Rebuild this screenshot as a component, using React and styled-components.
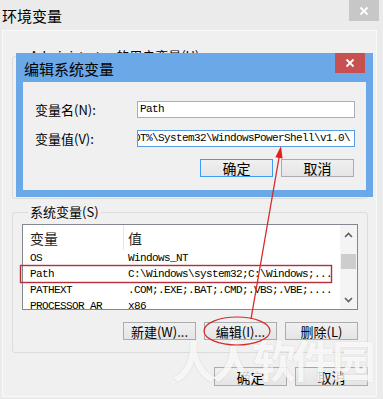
import styled, { createGlobalStyle } from "styled-components";

const UI = `"Noto Sans CJK SC", "Microsoft YaHei", sans-serif`;
const MONO = `"Liberation Mono", "Noto Sans CJK SC", monospace`;

const GlobalStyle = createGlobalStyle`
  html, body {
    margin: 0;
    padding: 0;
    background: #ebebeb;
  }
  body {
    width: 383px;
    height: 399px;
    overflow: hidden;
  }
`;

const Window = styled.div`
  position: relative;
  width: 383px;
  height: 399px;
  background: #ebebeb;
  display: flex;
  flex-direction: column;
  font-family: ${UI};
  color: #000;
  overflow: hidden;
`;

const TitleBar = styled.div`
  height: 29px;
  display: flex;
  align-items: center;
  justify-content: space-between;
  padding-left: 2px;
`;

const Title = styled.span`
  font-size: 15px;
  line-height: 1;
  margin-top: 1px;
`;

const CloseButton = styled.div`
  align-self: flex-start;
  width: 30px;
  height: ${(p) => p.$h}px;
  margin-right: ${(p) => p.$mr}px;
  background: ${(p) => p.$bg};
  display: flex;
  align-items: center;
  justify-content: center;
`;

const Client = styled.div`
  margin: 1px 6px 2px 2px;
  height: 367px;
  box-sizing: border-box;
  border: 1px solid #fafafa;
  background: #f0f0f0;
  padding: 18px 8px 0 9px;
  display: flex;
  flex-direction: column;
`;

const Group = styled.fieldset`
  margin: 0 0 ${(p) => p.$mb || 0}px 0;
  padding: ${(p) => p.$pad};
  border: 1px solid #dcdcdc;
  border-radius: 3px;
  height: ${(p) => p.$h}px;
  box-sizing: border-box;
  min-width: 0;
  display: flex;
  flex-direction: column;
`;

const Legend = styled.legend`
  padding: 0 2px;
  margin-left: 6px;
  font-size: 13px;
  line-height: 14px;
`;

const ListView = styled.div`
  height: 86px;
  box-sizing: border-box;
  border: 1px solid #828790;
  background: #fff;
  display: flex;
  overflow: hidden;
`;

const ListBody = styled.div`
  flex: 1;
  min-width: 0;
  overflow: hidden;
`;

const HeaderRow = styled.div`
  display: grid;
  grid-template-columns: 100px 1fr;
  height: 25px;
  font-size: 14px;
  color: #1e1e1e;
`;

const HeaderCell = styled.div`
  display: flex;
  align-items: center;
  padding-left: ${(p) => (p.$second ? 4 : 7)}px;
  border-left: ${(p) => (p.$second ? "1px solid #e5e5e5" : "none")};
`;

const Row = styled.div`
  display: grid;
  grid-template-columns: 100px 1fr;
  height: 16px;
  line-height: 16px;
  font-family: ${MONO};
  font-size: 11px;
  letter-spacing: -0.6px;
  white-space: nowrap;
`;

const Cell = styled.div`
  padding-left: ${(p) => (p.$second ? 5 : 7)}px;
  overflow: hidden;
`;

const ScrollBar = styled.div`
  width: 17px;
  background: #f4f4f4;
  display: flex;
  flex-direction: column;
`;

const ArrowBtn = styled.div`
  height: 19px;
  display: flex;
  align-items: center;
  justify-content: center;
  margin-top: ${(p) => (p.$down ? "auto" : 0)};
`;

const Thumb = styled.div`
  height: 15px;
  margin: 10px 1px 0;
  background: #cdcdcd;
`;

const ButtonRow = styled.div`
  display: flex;
  justify-content: flex-end;
  gap: 8px;
  margin-top: ${(p) => p.$mt}px;
  margin-right: ${(p) => p.$mr || 0}px;
`;

const Button = styled.div`
  width: 73px;
  height: ${(p) => p.$h}px;
  box-sizing: border-box;
  border: 1px solid ${(p) => (p.$default ? "#3c9bf5" : "#acacac")};
  background: linear-gradient(#f0f0f0, #e5e5e5);
  display: flex;
  align-items: center;
  justify-content: center;
  font-size: ${(p) => p.$fs || 14}px;
  line-height: 1;
`;

const Dialog = styled.div`
  position: absolute;
  left: 16px;
  top: 53px;
  width: 357px;
  height: 144px;
  box-sizing: border-box;
  background: #6aa8e8;
  padding: 0 7px 7px;
  display: flex;
  flex-direction: column;
`;

const DialogTitleBar = styled.div`
  height: 29px;
  display: flex;
  align-items: center;
  justify-content: space-between;
  padding-left: 1px;
`;

const DialogClient = styled.div`
  flex: 1;
  background: #f0f0f0;
  padding: 19px 11px 0 12px;
  display: flex;
  flex-direction: column;
`;

const Field = styled.div`
  display: flex;
  align-items: center;
  margin-top: ${(p) => p.$mt || 0}px;
`;

const Label = styled.div`
  width: 102px;
  font-size: 13px;
  line-height: 1;
`;

const Input = styled.div`
  flex: 1;
  height: 17px;
  box-sizing: border-box;
  border: 1px solid ${(p) => (p.$focus ? "#569de5" : "#abadb3")};
  background: #fff;
  font-family: ${MONO};
  font-size: 11px;
  letter-spacing: -0.6px;
  line-height: 15px;
  white-space: nowrap;
  overflow: hidden;
  padding-left: ${(p) => (p.$focus ? 0 : 2)}px;
  text-indent: ${(p) => (p.$focus ? -4 : 0)}px;
`;

const Watermark = styled.div`
  position: absolute;
  left: 172px;
  top: 337px;
  font-family: ${UI};
  font-size: 44px;
  font-weight: 700;
  letter-spacing: -4px;
  line-height: 1;
  color: rgba(255, 255, 255, 0.82);
  text-shadow: 0 0 2px rgba(0, 0, 0, 0.12);
  pointer-events: none;
`;

const Overlay = styled.svg`
  position: absolute;
  left: 0;
  top: 0;
  pointer-events: none;
`;

const CloseX = () => (
  <svg width="10" height="10" viewBox="0 0 10 10">
    <path d="M1.5 1.5 L8.5 8.5 M8.5 1.5 L1.5 8.5" stroke="#fff" strokeWidth="1.8" />
  </svg>
);

const Chevron = ({ down }) => (
  <svg width="9" height="6" viewBox="0 0 9 6">
    <polyline
      points={down ? "1,1 4.5,4.5 8,1" : "1,5 4.5,1.5 8,5"}
      fill="none"
      stroke="#606060"
      strokeWidth="1.6"
    />
  </svg>
);

const rows = [
  ["OS", "Windows_NT"],
  ["Path", "C:\\Windows\\system32;C:\\Windows;..."],
  ["PATHEXT", ".COM;.EXE;.BAT;.CMD;.VBS;.VBE;...."],
  ["PROCESSOR_AR", "x86"],
];

export default function App() {
  return (
    <>
      <GlobalStyle />
      <Window>
        <TitleBar>
          <Title>环境变量</Title>
          <CloseButton $h={21} $mr={4} $bg="#c7c7c7">
            <CloseX />
          </CloseButton>
        </TitleBar>
        <Client>
          <Group $h={150} $mb={6} $pad="0 9px">
            <Legend>Administrator 的用户变量(U)</Legend>
          </Group>
          <Group $h={148} $pad="5px 9px 12px 9px">
            <Legend>系统变量(S)</Legend>
            <ListView>
              <ListBody>
                <HeaderRow>
                  <HeaderCell>变量</HeaderCell>
                  <HeaderCell $second>值</HeaderCell>
                </HeaderRow>
                {rows.map(([name, value]) => (
                  <Row key={name}>
                    <Cell>{name}</Cell>
                    <Cell $second>{value}</Cell>
                  </Row>
                ))}
              </ListBody>
              <ScrollBar>
                <ArrowBtn>
                  <Chevron />
                </ArrowBtn>
                <Thumb />
                <ArrowBtn $down>
                  <Chevron down />
                </ArrowBtn>
              </ScrollBar>
            </ListView>
            <ButtonRow $mt={12}>
              <Button $h={18} $fs={13}>新建(W)...</Button>
              <Button $h={18} $fs={13}>编辑(I)...</Button>
              <Button $h={18} $fs={13}>删除(L)</Button>
            </ButtonRow>
          </Group>
          <ButtonRow $mt={14}>
            <Button $h={19}>确定</Button>
            <Button $h={19}>取消</Button>
          </ButtonRow>
        </Client>

        <Dialog>
          <DialogTitleBar>
            <Title>编辑系统变量</Title>
            <CloseButton $h={20} $mr={1} $bg="#c75050">
              <CloseX />
            </CloseButton>
          </DialogTitleBar>
          <DialogClient>
            <Field>
              <Label>变量名(N):</Label>
              <Input>Path</Input>
            </Field>
            <Field $mt={12}>
              <Label>变量值(V):</Label>
              <Input $focus>OT%\System32\WindowsPowerShell\v1.0\</Input>
            </Field>
            <ButtonRow $mt={12} $mr={1}>
              <Button $h={18} $default>确定</Button>
              <Button $h={18}>取消</Button>
            </ButtonRow>
          </DialogClient>
        </Dialog>

        <Watermark>人人软件园</Watermark>

        <Overlay width="383" height="399" viewBox="0 0 383 399">
          <rect x="20.5" y="265.5" width="311" height="17" fill="none" stroke="#b3303a" strokeWidth="1.4" />
          <ellipse cx="237" cy="331" rx="33" ry="14" fill="none" stroke="#d42a2a" strokeWidth="1.2" />
          <line x1="251" y1="319" x2="280" y2="152" stroke="#d42a2a" strokeWidth="1.3" />
          <polygon points="281,146 282.6,158.4 275.4,157.2" fill="#e02020" />
        </Overlay>
      </Window>
    </>
  );
}
